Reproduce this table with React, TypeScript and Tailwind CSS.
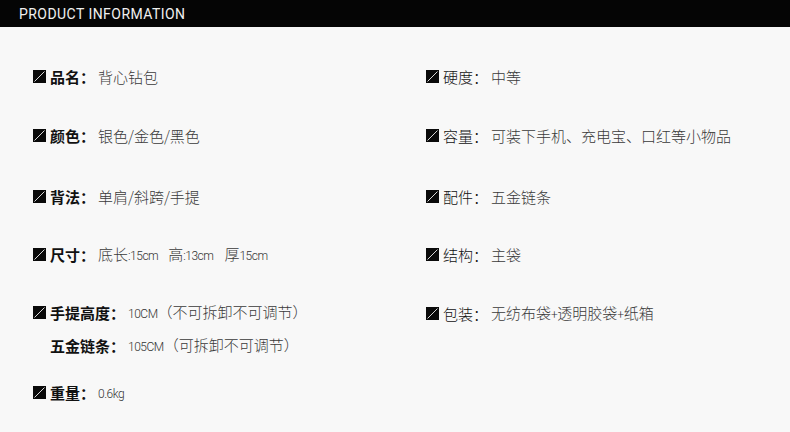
import React from "react";

const cjk = { fontFamily: '"Noto Sans CJK SC", "Noto Sans", sans-serif' };
const latin = { fontFamily: 'Roboto, "Liberation Sans", sans-serif' };

function Mark() {
  return (
    <svg width="13" height="13" viewBox="0 0 13 13" className="shrink-0">
      <rect x="0" y="0" width="13" height="13" fill="#0a0a0a" />
      <line x1="1.5" y1="11.5" x2="11.5" y2="1.5" stroke="#d8d8d8" strokeWidth="1" />
    </svg>
  );
}

function N({ children }: { children: React.ReactNode }) {
  return (
    <span style={latin} className="text-[12px] tracking-[-0.5px] text-[#333] font-light">
      {children}
    </span>
  );
}

function Row({
  label,
  bold,
  children,
  icon = true,
  className = "",
}: {
  label: string;
  bold?: boolean;
  children: React.ReactNode;
  icon?: boolean;
  className?: string;
}) {
  return (
    <div className={"flex h-[20px] items-center " + className}>
      {icon ? <Mark /> : <span className="w-[13px] shrink-0" />}
      <span
        className={
          "ml-[4px] text-[15px] leading-none text-[#111] " + (bold ? "font-bold" : "font-light")
        }
      >
        {label}：
      </span>
      <span className="ml-[3px] text-[15px] leading-none text-[#3a3a3a] font-light whitespace-nowrap">
        {children}
      </span>
    </div>
  );
}

export default function App() {
  return (
    <div style={cjk} className="w-[790px] h-[432px] bg-[#f8f8f8] overflow-hidden">
      <div className="h-[27px] bg-[#050505] flex items-center pl-[19px]">
        <span
          style={latin}
          className="text-[14px] text-[#f0f0f0] tracking-[0.45px] leading-none pt-[1px]"
        >
          PRODUCT INFORMATION
        </span>
      </div>
      <div className="flex pl-[33px]">
        <div className="w-[393px] flex flex-col">
          <Row label="品名" bold className="mt-[39px]">
            背心钻包
          </Row>
          <Row label="颜色" bold className="mt-[39px]">
            银色/金色/黑色
          </Row>
          <Row label="背法" bold className="mt-[41px]">
            单肩/斜跨/手提
          </Row>
          <Row label="尺寸" bold className="mt-[38px]">
            底长<N>:15cm</N>
            <span className="ml-[10px]">高</span>
            <N>:13cm</N>
            <span className="ml-[11px]">厚</span>
            <N>15cm</N>
          </Row>
          <Row label="手提高度" bold className="mt-[38px]">
            <N>10CM</N>（不可拆卸不可调节）
          </Row>
          <Row label="五金链条" bold icon={false} className="mt-[13px]">
            <N>105CM</N>（可拆卸不可调节）
          </Row>
          <Row label="重量" bold className="mt-[27px]">
            <N>0.6kg</N>
          </Row>
        </div>
        <div className="flex flex-col">
          <Row label="硬度" className="mt-[39px]">
            中等
          </Row>
          <Row label="容量" className="mt-[39px]">
            可装下手机、充电宝、口红等小物品
          </Row>
          <Row label="配件" className="mt-[41px]">
            五金链条
          </Row>
          <Row label="结构" className="mt-[38px]">
            主袋
          </Row>
          <Row label="包装" className="mt-[39px]">
            无纺布袋<N>+</N>透明胶袋<N>+</N>纸箱
          </Row>
        </div>
      </div>
    </div>
  );
}
